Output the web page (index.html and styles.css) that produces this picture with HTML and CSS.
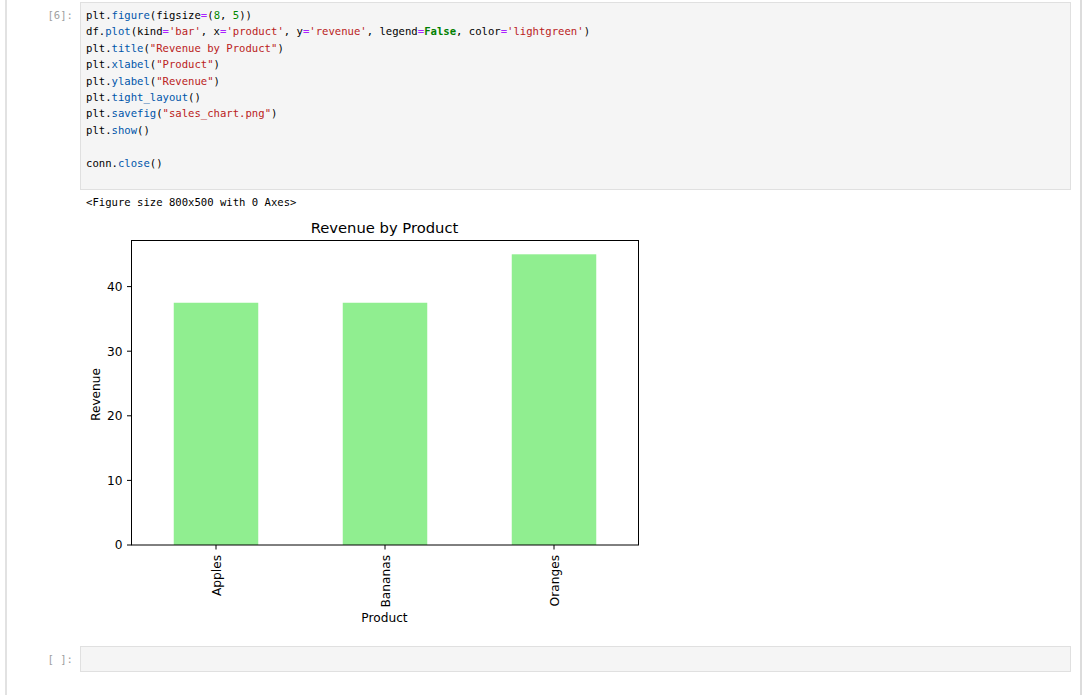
FILE: index.html
```html
<!DOCTYPE html>
<html>
<head>
<meta charset="utf-8">
<link rel="stylesheet" href="styles.css">
</head>
<body>
<div class="notebook">
  <div class="cell first">
    <div class="prompt">[6]:</div>
    <div class="cell-body">
      <div class="input filled"><pre class="code"><span class="v">plt</span>.<span class="p">figure</span>(figsize<span class="o">=</span>(<span class="n">8</span>, <span class="n">5</span>))
<span class="v">df</span>.<span class="p">plot</span>(kind<span class="o">=</span><span class="s">'bar'</span>, x<span class="o">=</span><span class="s">'product'</span>, y<span class="o">=</span><span class="s">'revenue'</span>, legend<span class="o">=</span><span class="k">False</span>, color<span class="o">=</span><span class="s">'lightgreen'</span>)
<span class="v">plt</span>.<span class="p">title</span>(<span class="s">"Revenue by Product"</span>)
<span class="v">plt</span>.<span class="p">xlabel</span>(<span class="s">"Product"</span>)
<span class="v">plt</span>.<span class="p">ylabel</span>(<span class="s">"Revenue"</span>)
<span class="v">plt</span>.<span class="p">tight_layout</span>()
<span class="v">plt</span>.<span class="p">savefig</span>(<span class="s">"sales_chart.png"</span>)
<span class="v">plt</span>.<span class="p">show</span>()

<span class="v">conn</span>.<span class="p">close</span>()</pre></div>
      <div class="output">
        <pre class="out-text">&lt;Figure size 800x500 with 0 Axes&gt;</pre>
        <svg class="chart" width="580" height="420" viewBox="80 211 580 420" xmlns="http://www.w3.org/2000/svg">
          <text class="title" x="384.5" y="232.5" text-anchor="middle">Revenue by Product</text>
          <rect x="173.75" y="302.75" width="84.5" height="242.25" fill="#90ee90"/>
          <rect x="342.75" y="302.75" width="84.5" height="242.25" fill="#90ee90"/>
          <rect x="511.75" y="254.3" width="84.5" height="290.7" fill="#90ee90"/>
          <rect x="131.5" y="240.5" width="507" height="304.5" fill="none" stroke="#000" stroke-width="1"/>
          <g stroke="#000" stroke-width="1">
            <line x1="127" y1="545" x2="131.5" y2="545"/>
            <line x1="127" y1="480.4" x2="131.5" y2="480.4"/>
            <line x1="127" y1="415.8" x2="131.5" y2="415.8"/>
            <line x1="127" y1="351.2" x2="131.5" y2="351.2"/>
            <line x1="127" y1="286.6" x2="131.5" y2="286.6"/>
            <line x1="216" y1="545" x2="216" y2="549.5"/>
            <line x1="385" y1="545" x2="385" y2="549.5"/>
            <line x1="554" y1="545" x2="554" y2="549.5"/>
          </g>
          <g class="tick" text-anchor="end">
            <text x="122.5" y="549.4">0</text>
            <text x="122.5" y="484.8">10</text>
            <text x="122.5" y="420.2">20</text>
            <text x="122.5" y="355.6">30</text>
            <text x="122.5" y="291">40</text>
          </g>
          <g class="tick" text-anchor="end">
            <text transform="translate(220.5,555) rotate(-90)">Apples</text>
            <text transform="translate(389.5,555) rotate(-90)">Bananas</text>
            <text transform="translate(558.5,555) rotate(-90)">Oranges</text>
          </g>
          <text class="tick" x="384.5" y="621.5" text-anchor="middle">Product</text>
          <text class="tick" transform="translate(99.5,394.5) rotate(-90)" text-anchor="middle">Revenue</text>
        </svg>
      </div>
    </div>
  </div>
  <div class="cell second">
    <div class="prompt">[ ]:</div>
    <div class="cell-body">
      <div class="input empty"></div>
    </div>
  </div>
</div>
</body>
</html>
```

FILE: styles.css
```css
html, body {
  margin: 0;
  padding: 0;
  background: #ffffff;
}

.notebook {
  margin-left: 5px;
  width: 1073px;
  height: 695px;
  border-left: 2px solid #e2e2e2;
  border-right: 2px solid #dcdcdc;
  box-sizing: content-box;
}

.cell {
  display: flex;
  align-items: flex-start;
}

.cell.first {
  padding-top: 2px;
}

.cell.second {
  margin-top: 15px;
}

.prompt {
  width: 73px;
  flex: none;
  box-sizing: border-box;
  padding-right: 7px;
  padding-top: 5px;
  text-align: right;
  font-family: "DejaVu Sans Mono", monospace;
  font-size: 10.6px;
  line-height: 16.4px;
  color: #a0a0a0;
}

.cell-body {
  width: 991px;
  flex: none;
}

.input {
  background: #f5f5f5;
  border: 1px solid #e0e0e0;
  padding: 4px 5px 2px 5px;
}

.input.filled {
  padding-bottom: 18.4px;
}

.input.empty {
  height: 24.4px;
  padding: 0;
}

.code, .out-text {
  margin: 0;
  font-family: "DejaVu Sans Mono", monospace;
  font-size: 10.6px;
  line-height: 16.4px;
  color: #000;
  white-space: pre;
}

.code .v { color: #000; }
.code .p { color: #0055aa; }
.code .o { color: #aa22ff; }
.code .n { color: #008800; }
.code .s { color: #ba2121; }
.code .k { color: #008000; font-weight: bold; }

.output {
  padding-top: 4px;
}

.out-text {
  padding-left: 6px;
  color: #000;
}

.chart {
  display: block;
  font-family: "DejaVu Sans", sans-serif;
}

.chart .title {
  font-size: 14.75px;
  fill: #000;
}

.chart .tick {
  font-size: 12.2px;
  fill: #000;
}
```
